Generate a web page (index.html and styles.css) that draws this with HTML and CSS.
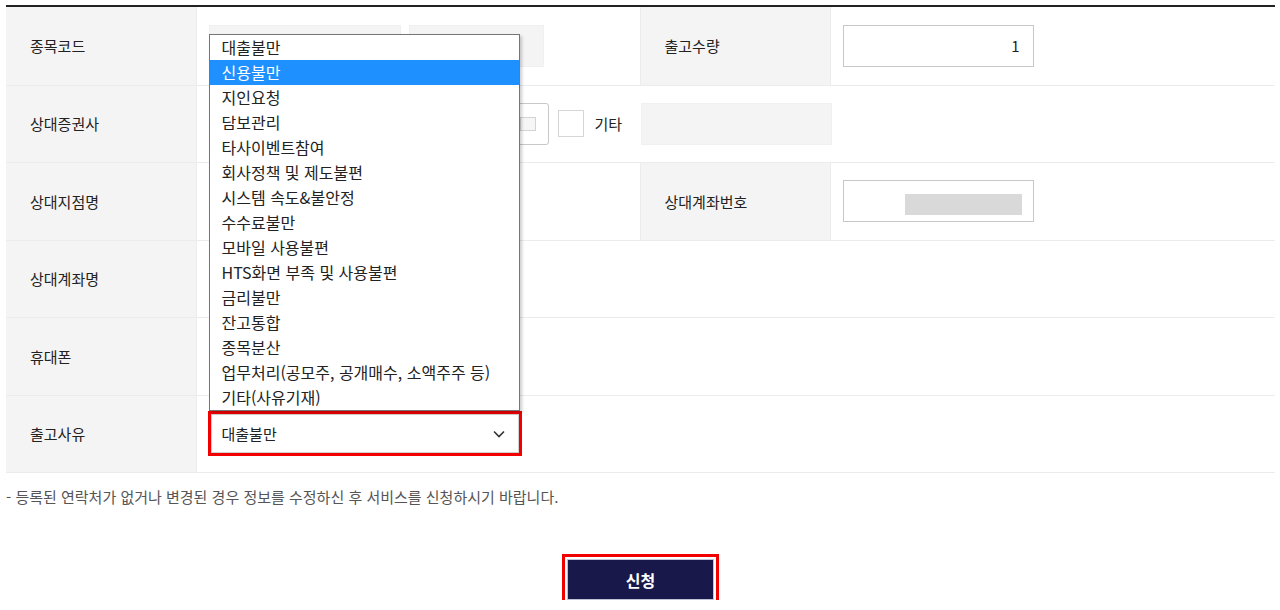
FILE: index.html
```html
<!DOCTYPE html>
<html lang="ko">

<head>
    <meta charset="UTF-8">
    <meta name="viewport" content="width=device-width, initial-scale=1.0">
    <title>출고신청</title>
    <link rel="stylesheet" href="styles.css">
</head>

<body>
    <div class="wrap">
        <table class="form-table">
            <colgroup>
                <col class="col-label">
                <col class="col-field">
                <col class="col-label">
                <col>
            </colgroup>
            <tr class="first-row">
                <th>종목코드</th>
                <td>
                    <div class="field-row">
                        <span class="input input-off code-input"></span>
                        <span class="input input-off name-input"></span>
                    </div>
                </td>
                <th>출고수량</th>
                <td><div class="input qty-input">1</div></td>
            </tr>
            <tr>
                <th>상대증권사</th>
                <td>
                    <div class="field-row">
                        <div class="broker-select"><span class="broker-btn"></span></div>
                        <span class="check-box"></span>
                        <span class="check-label">기타</span>
                    </div>
                </td>
                <td colspan="2"><span class="input input-off etc-input"></span></td>
            </tr>
            <tr>
                <th>상대지점명</th>
                <td></td>
                <th>상대계좌번호</th>
                <td><div class="input acct-input"><span class="masked"></span></div></td>
            </tr>
            <tr>
                <th>상대계좌명</th>
                <td colspan="3"></td>
            </tr>
            <tr>
                <th>휴대폰</th>
                <td colspan="3"></td>
            </tr>
            <tr>
                <th>출고사유</th>
                <td colspan="3">
                    <div class="reason-wrap">
                        <div class="reason-select">
                            <span>대출불만</span>
                            <svg class="chevron" width="12" height="8" viewBox="0 0 12 8">
                                <path d="M1 1.5 L6 6.5 L11 1.5" fill="none" stroke="#333" stroke-width="1.6"/>
                            </svg>
                        </div>
                        <!-- 열린 목록 -->
                        <ul class="reason-list">
                            <li>대출불만</li>
                            <li class="selected">신용불만</li>
                            <li>지인요청</li>
                            <li>담보관리</li>
                            <li>타사이벤트참여</li>
                            <li>회사정책 및 제도불편</li>
                            <li>시스템 속도&amp;불안정</li>
                            <li>수수료불만</li>
                            <li>모바일 사용불편</li>
                            <li>HTS화면 부족 및 사용불편</li>
                            <li>금리불만</li>
                            <li>잔고통합</li>
                            <li>종목분산</li>
                            <li>업무처리(공모주, 공개매수, 소액주주 등)</li>
                            <li>기타(사유기재)</li>
                        </ul>
                    </div>
                </td>
            </tr>
        </table>

        <p class="notice">- 등록된 연락처가 없거나 변경된 경우 정보를 수정하신 후 서비스를 신청하시기 바랍니다.</p>

        <div class="btn-area">
            <button type="button" class="submit-btn">신청</button>
        </div>
    </div>
</body>

</html>
```
FILE: styles.css
```css
* {
    box-sizing: border-box;
    margin: 0px;
    padding: 0px;
}

body {
    font-family: "Noto Sans CJK KR", "Noto Sans", sans-serif;
    font-size: 15px;
    color: #222;
    background-color: #fff;
}

.wrap {
    padding: 5px 5px 0px 6px;
}

/* 입력 표 */
.form-table {
    width: 100%;
    border-collapse: collapse;
    border-top: 2px solid #222;
    table-layout: fixed;
}

.col-label {
    width: 190px;
}

.col-field {
    width: 444px;
}

.form-table th,
.form-table td {
    height: 77.5px;
    border-bottom: 1px solid #ececec;
    vertical-align: middle;
}

.form-table .first-row th,
.form-table .first-row td {
    height: 79px;
}

.form-table th {
    background-color: #f4f4f4;
    font-weight: normal;
    text-align: left;
    padding-left: 24px;
    border-left: 1px solid #ececec;
    border-right: 1px solid #ececec;
}

.form-table tr th:first-child {
    border-left: none;
}

.form-table td {
    padding-left: 12px;
}

.field-row {
    display: flex;
    align-items: center;
}

.input {
    display: block;
    height: 42px;
    border: 1px solid #c8c8c8;
    background-color: #fff;
}

.input-off {
    background-color: #f4f4f4;
    border-color: #f0f0f0;
}

.code-input {
    width: 192px;
}

.name-input {
    width: 135px;
    margin-left: 8px;
}

.qty-input {
    width: 191px;
    text-align: right;
    padding-right: 13px;
    line-height: 40px;
    font-size: 15px;
}

.broker-select {
    width: 340px;
    height: 42px;
    border: 1px solid #c8c8c8;
    border-radius: 3px;
    display: flex;
    align-items: center;
    justify-content: flex-end;
    padding-right: 12px;
}

.broker-btn {
    width: 16px;
    height: 14px;
    border: 1px solid #d4d4d4;
    background-color: #f6f6f6;
}

.check-box {
    width: 26px;
    height: 27px;
    border: 1px solid #d6d6d6;
    margin-left: 9px;
}

.check-label {
    margin-left: 11px;
}

.etc-input {
    width: 191px;
    margin-left: -11px;
}

.acct-input {
    width: 191px;
    position: relative;
}

.masked {
    position: absolute;
    left: 61px;
    top: 13px;
    width: 117px;
    height: 21px;
    background-color: #d9d9d9;
}

/* 출고사유 선택 */
.reason-wrap {
    position: relative;
    width: 308px;
    margin-left: 2px;
}

.reason-select {
    height: 39px;
    border: 1px solid #d0d0d0;
    outline: 3px solid #f20000;
    display: flex;
    align-items: center;
    justify-content: space-between;
    padding: 0px 13px 0px 10px;
    font-size: 15px;
}

.reason-list {
    position: absolute;
    left: -2px;
    bottom: calc(100% + 3px);
    width: 311px;
    list-style: none;
    background-color: #fff;
    border: 1px solid #767676;
    box-shadow: 2px 2px 3px rgba(0, 0, 0, 0.2);
    font-size: 16px;
}

.reason-list li {
    height: 25px;
    line-height: 25px;
    padding-left: 12px;
    white-space: nowrap;
}

.reason-list .selected {
    background-color: #1e90ff;
    color: #fff;
}

.notice {
    margin-top: 14px;
    line-height: 20px;
    color: #555;
    font-size: 15px;
}

.btn-area {
    display: flex;
    justify-content: center;
    margin-top: 52px;
}

.submit-btn {
    width: 147px;
    height: 41px;
    background-color: #18184a;
    border: 1px solid #bfc3d6;
    color: #fff;
    font-family: inherit;
    font-size: 16px;
    font-weight: bold;
    outline: 3px solid #f20000;
    outline-offset: 2px;
}
```
